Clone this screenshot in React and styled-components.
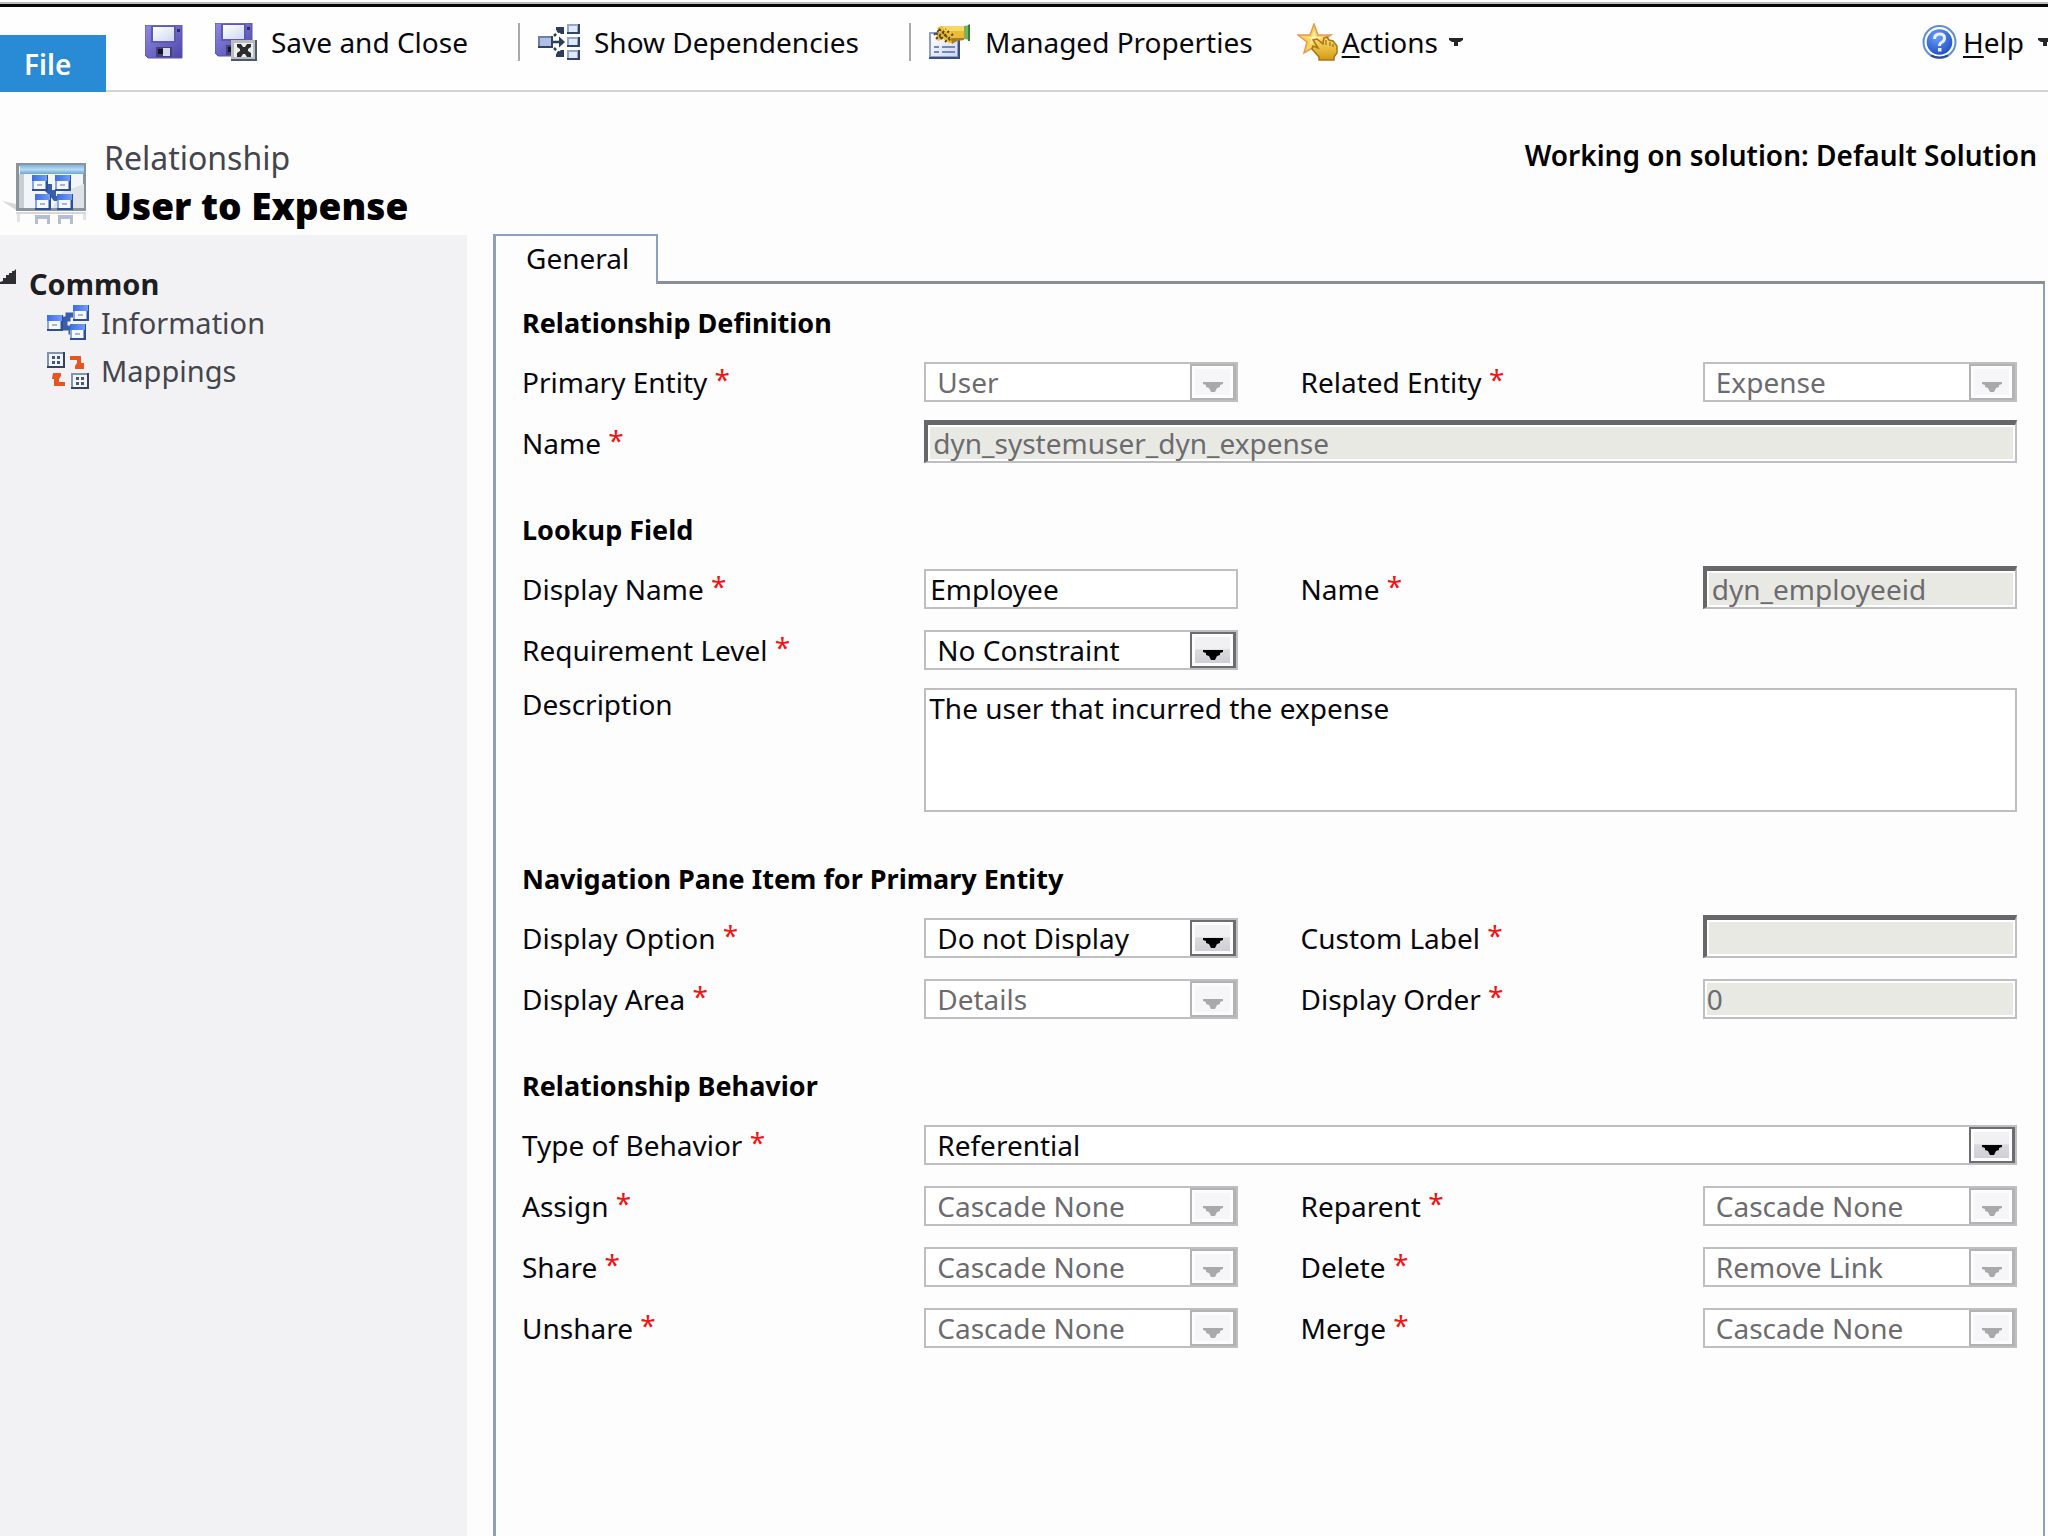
import React from "react";
import styled, { createGlobalStyle } from "styled-components";

const FONT = '"Noto Sans", "Open Sans", sans-serif';

const GlobalStyle = createGlobalStyle`
  *, *::before, *::after { box-sizing: border-box; }
  html, body { margin: 0; }
  body { background: #fdfdfe; color: #08080f; font-family: ${FONT}; font-size: 28px; line-height: 36px; }
  button, input, select, textarea { font: inherit; color: inherit; margin: 0; border-radius: 0; }
`;

const Page = styled.div`
  display: flex;
  flex-direction: column;
  min-height: 100vh;
  overflow: hidden;
`;

const TopEdge = styled.div`
  height: 7px;
  border-top: 2px solid #fff;
  border-bottom: 3px solid #0a0a0a;
  background: #bcbcbc;
`;

const Toolbar = styled.header`
  display: flex;
  align-items: flex-start;
  height: 85px;
  background: #fefefe;
  box-shadow: inset 0 -2px #d3d3d3;
`;

const FileButton = styled.button`
  flex: none;
  width: 106px;
  height: 57px;
  margin-top: 28px;
  padding: 0 24px;
  border: 0;
  background: #298bd6;
  color: #fff;
  font-weight: 600;
  text-align: left;
`;

const Tools = styled.nav`
  display: flex;
  flex: 1;
  align-items: center;
  height: 70px;
  padding-left: 39px;
`;

const ToolButton = styled.button`
  display: flex;
  align-items: center;
  gap: ${(p) => p.$gap ?? 14}px;
  margin-right: ${(p) => p.$after ?? 0}px;
  padding: 0;
  border: 0;
  background: none;
  white-space: nowrap;
  svg { flex: none; }
`;

const Separator = styled.span`
  width: 2px;
  height: 38px;
  margin: 0 18px 0 50px;
  background: #a9a9ae;
`;

const Spacer = styled.span`
  flex: 1;
`;

const AccessKey = styled.span`
  text-decoration: underline;
  text-decoration-thickness: 2px;
  text-underline-offset: 3px;
`;

const CaretSlot = styled.span`
  display: flex;
  padding-left: 8px;
`;

const TitleBar = styled.div`
  display: flex;
  align-items: flex-start;
  height: 143px;
  padding: 42px 11px 0 2px;
`;

const TitleIcon = styled.div`
  display: flex;
  width: 102px;
  padding-top: 28px;
`;

const Titles = styled.div`
  flex: 1;
`;

const Kind = styled.div`
  color: #45454d;
  font-size: 32px;
  line-height: 48px;
`;

const RecordName = styled.h1`
  margin: 0;
  color: #000;
  font-size: 37px;
  font-weight: 900;
  line-height: 48px;
`;

const SolutionNote = styled.div`
  font-weight: 600;
  line-height: 42px;
  color: #000;
`;

const Body = styled.div`
  display: flex;
  flex: 1;
`;

const Sidebar = styled.aside`
  flex: none;
  width: 467px;
  padding-top: 34px;
  background: #f2f2f5;
`;

const NavHeading = styled.h2`
  display: flex;
  align-items: flex-start;
  gap: 13px;
  margin: 0;
  color: #1d1d22;
  font-size: 29px;
  font-weight: 700;
  line-height: 30px;
  svg { flex: none; }
`;

const NavList = styled.ul`
  margin: 0;
  padding: 0 0 0 47px;
  list-style: none;
`;

const NavLink = styled.a`
  display: flex;
  align-items: center;
  gap: 12px;
  height: 48px;
  color: #45454d;
  font-size: 29px;
  text-decoration: none;
`;

const Main = styled.main`
  display: flex;
  flex: 1;
  flex-direction: column;
  min-width: 0;
  margin: -1px 3px 0 26px;
`;

const TabStrip = styled.div`
  display: flex;
  height: 50px;
`;

const Tab = styled.button`
  padding: 0 27px 4px 30px;
  border: solid #8ba0bd;
  border-width: 2px 2px 0 3px;
  background: none;
`;

const TabRule = styled.div`
  flex: 1;
  border-bottom: 3px solid #8a8d92;
`;

const Panel = styled.form`
  flex: 1;
  padding: 21px 26px 40px 26px;
  border: solid #8ba0bd;
  border-width: 0 2px 0 3px;
`;

const Section = styled.section`
  margin-bottom: 49px;
`;

const SectionTitle = styled.h3`
  margin: 0 0 21px;
  color: #000;
  font-size: 27px;
  font-weight: 700;
  line-height: 36px;
`;

const Row = styled.div`
  display: grid;
  grid-template-columns:
    minmax(0, 402fr) minmax(0, 314fr) minmax(0, 62fr) minmax(0, 402fr) minmax(0, 314fr);
  grid-template-rows: ${(p) => (p.$tall ? "124px" : "40px")};
  align-items: ${(p) => (p.$tall ? "start" : "end")};
  margin-top: ${(p) => (p.$first ? 0 : p.$tall ? 18 : 21)}px;
`;

const Label = styled.label`
  grid-column: ${(p) => (p.$right ? 4 : 1)};
  line-height: ${(p) => (p.$top ? 32 : 40)}px;
  white-space: nowrap;
`;

const Required = styled.span`
  color: #f01414;
  line-height: 0;
  vertical-align: 3px;
`;

const place = (p) => (p.$wide ? "2 / -1" : p.$right ? "5" : "2");

const TextInput = styled.input`
  grid-column: ${place};
  width: 100%;
  height: 40px;
  padding: 0 4px;
  border: 2px solid #bfbfc2;
  background: #fff;
  outline: 0;
  &:disabled {
    padding: 0 2px;
    background: #e9e9e4;
    box-shadow: inset 0 0 0 2px #fff;
    color: #6c6c70;
  }
`;

const InsetInput = styled(TextInput)`
  height: 43px;
  border-color: #67666a #bfbfc2 #bfbfc2 #67666a;
  border-width: 5px 2px 2px 4px;
  &:disabled { padding: 0 5px; }
`;

const TextArea = styled.textarea`
  grid-column: 2 / -1;
  width: 100%;
  height: 124px;
  padding: 0 3px;
  border: 2px solid #bfbfc2;
  background: #fff;
  outline: 0;
  resize: none;
`;

const SelectFrame = styled.div`
  display: grid;
  grid-column: ${place};
  height: 40px;
  border: 2px solid #bfbfc2;
  background: #fff;
`;

const SelectBox = styled.select`
  grid-area: 1 / 1;
  width: 100%;
  height: 36px;
  padding: 0 48px 0 11px;
  border: 0;
  outline: 0;
  appearance: none;
  background: none;
  &:disabled { color: #6c6c70; opacity: 1; }
`;

const SelectArrow = styled.span`
  display: flex;
  grid-area: 1 / 1;
  align-items: flex-end;
  justify-content: center;
  justify-self: end;
  width: 46px;
  height: 36px;
  padding-bottom: 6px;
  border: solid ${(p) => (p.$off ? "#b3b3b6" : "#6d6c72")};
  border-width: 2px 3px 2px 2px;
  background: ${(p) =>
    p.$off ? "#f6f6f8" : "linear-gradient(#f1f1f4 45%, #d9d9de 50%, #cdcdd3)"};
  box-shadow: inset 0 0 0 3px #fcfcfd;
  color: ${(p) => (p.$off ? "#a9a9ac" : "#000")};
  pointer-events: none;
`;

/* ---------- drawings ---------- */

const Caret = () => (
  <svg width="14" height="8" viewBox="0 0 14 8" aria-hidden="true">
    <path d="M0 0h14v2l-3 2H9v4H5V4H3L0 2z" fill="#26262a" />
  </svg>
);

const Disk = () => (
  <>
    <path d="M0 0h37v33H3l-3-3z" fill="url(#disk)" />
    <path d="M0 0h37v33H3l-3-3z" fill="none" stroke="#5a54ac" strokeWidth="1" />
    <rect x="6" y="1" width="25" height="17" fill="#5d58b0" />
    <rect x="8" y="2" width="21" height="14" fill="url(#paper)" />
    <rect x="32" y="4" width="3" height="3" fill="#2e2a70" />
    <rect x="11" y="22" width="16" height="10" fill="#45417a" />
    <rect x="18" y="23" width="7" height="8" fill="#d6dcee" />
    <rect x="13" y="24" width="5" height="5" fill="#15141f" />
  </>
);

const SharedPaints = () => (
  <svg width="0" height="0" style={{ position: "absolute" }} aria-hidden="true">
    <defs>
      <linearGradient id="disk" x1="0" y1="0" x2="1" y2="1">
        <stop offset="0" stopColor="#8f8be0" />
        <stop offset="1" stopColor="#4d46ab" />
      </linearGradient>
      <linearGradient id="paper" x1="0" y1="0" x2="1" y2="1">
        <stop offset="0" stopColor="#ffffff" />
        <stop offset="1" stopColor="#cfd8f1" />
      </linearGradient>
      <linearGradient id="blueTop" x1="0" y1="0" x2="1" y2="0">
        <stop offset="0" stopColor="#3c6ee0" />
        <stop offset="1" stopColor="#6f9cf5" />
      </linearGradient>
      <linearGradient id="gold" x1="0" y1="0" x2="0" y2="1">
        <stop offset="0" stopColor="#fbe070" />
        <stop offset="1" stopColor="#d49a12" />
      </linearGradient>
      <linearGradient id="sky" x1="0" y1="0" x2="0" y2="1">
        <stop offset="0" stopColor="#7fb2dc" />
        <stop offset="0.5" stopColor="#b5dcf5" />
        <stop offset="1" stopColor="#6fa3d0" />
      </linearGradient>
      <radialGradient id="helpBall" cx="0.4" cy="0.3" r="0.8">
        <stop offset="0" stopColor="#6aa0f6" />
        <stop offset="1" stopColor="#1747c4" />
      </radialGradient>
    </defs>
  </svg>
);

const SaveIcon = () => (
  <svg width="38" height="34" viewBox="0 0 38 34" aria-hidden="true">
    <Disk />
  </svg>
);

const SaveCloseIcon = () => (
  <svg width="42" height="38" viewBox="0 0 42 38" aria-hidden="true">
    <Disk />
    <rect x="16" y="17" width="26" height="21" fill="#4a5a66" />
    <rect x="16" y="17" width="24" height="19" fill="#b9bdc0" />
    <rect x="19" y="20" width="19" height="14" fill="#eceded" />
    <path d="M22 21h4l2 3h2l2-3h4v3l-3 2v2l3 2v4h-4l-2-3h-2l-2 3h-4v-4l3-2v-2l-3-2z" fill="#2c2c2c" />
  </svg>
);

const DependenciesIcon = () => (
  <svg width="42" height="36" viewBox="0 0 42 36" aria-hidden="true">
    <rect x="0" y="12" width="15" height="12" fill="#33425e" />
    <rect x="0" y="12" width="13" height="10" fill="#6c7fa8" />
    <rect x="2" y="14" width="11" height="8" fill="#b1bfe6" />
    {[0, 13, 26].map((y) => (
      <g key={y}>
        <rect x="29" y={y} width="13" height="10" fill="#2f4468" />
        <rect x="29" y={y} width="11" height="8" fill="#94a7c8" />
        <rect x="31" y={y + 2} width="8" height="6" fill="#dfe9fb" />
      </g>
    ))}
    <path d="M15 18h9" stroke="#2b3f5c" strokeWidth="2.5" />
    <path d="M21 12.500l6 5.500-6 5.500z" fill="#2b3f5c" />
    <path d="M16 12l8-8M16 24l8 8" stroke="#2b3f5c" strokeWidth="2.500" strokeDasharray="3 2" />
    <path d="M18 3h8v7h-3l-5-4zM18 33h8v-7h-3l-5 4z" fill="#2b3f5c" />
  </svg>
);

const PropertiesIcon = () => (
  <svg width="42" height="36" viewBox="0 0 42 36" aria-hidden="true">
    <rect x="0" y="8" width="31" height="27" fill="#38507f" />
    <rect x="0" y="8" width="29" height="25" fill="#8ea0c6" />
    <rect x="2" y="10" width="26" height="22" fill="url(#paper)" />
    <path d="M5 23h5M13 23h13M5 28h5M13 28h13" stroke="#7387b4" strokeWidth="2" />
    <path d="M8 4l4-2h23l1 2v10l-7 2-5 3h-4l-6-4-5 2-2-4 4-5z" fill="#e9bd3a" />
    <path d="M13 2h22v5H16z" fill="#f7d865" />
    <path d="M22 14h13v2l-7 1-5 3z" fill="#a87b1c" />
    <path d="M5 11l5-5M7 15l10-10M12 15l8-8M16 18l8-8M10 5l12 12M7 9l6 6" stroke="#5a430c" strokeWidth="1.800" strokeDasharray="2.500 2" />
    <path d="M35 2l6-1v15l-6-1z" fill="#7ab264" />
    <path d="M39 1l2-1v17h-2z" fill="#3c7d33" />
  </svg>
);

const ActionsIcon = () => (
  <svg width="42" height="38" viewBox="0 0 42 38" aria-hidden="true">
    <path d="M17 1l4 11h13l-10 7 3 12-10-7-10 6 3-11L1 12h12z" fill="#fbd45a" stroke="#e39a5a" strokeWidth="1.500" />
    <path d="M17 7l2 7h6l-6 5-6 2 1-5-5-2h6z" fill="#fff2a8" />
    <path d="M16 17l4-1 6 5 1-6 3-1 2 3 4 1 4 5v7l-3 4v3H22v-3l-7-8 1-3 5 2z" fill="url(#gold)" stroke="#a87516" strokeWidth="1.500" />
    <path d="M29 17v5M33 19v4M36 21v3" stroke="#a87516" strokeWidth="1.300" />
  </svg>
);

const HelpIcon = () => (
  <svg width="35" height="34" viewBox="0 0 35 34" aria-hidden="true">
    <circle cx="17.500" cy="17" r="16" fill="#fff" stroke="#5b8fd6" strokeWidth="2" />
    <path d="M9 30.500q8.500 4 17 0" fill="none" stroke="#2c4f86" strokeWidth="2" />
    <circle cx="17.500" cy="17" r="12.800" fill="url(#helpBall)" />
    <path d="M12.500 14q0-5 5-5t5 4q0 3-3 4.500-2 1-2 3.500" fill="none" stroke="#e9f0ff" strokeWidth="3" />
    <rect x="16" y="23" width="3.500" height="3.500" fill="#e9f0ff" />
  </svg>
);

const Entity = ({ x, y }) => (
  <g transform={`translate(${x} ${y})`}>
    <rect width="16" height="16" fill="#2d4f98" />
    <rect width="14" height="14" fill="#8aa6e4" />
    <rect width="15" height="6" fill="url(#blueTop)" />
    <rect x="2" y="6" width="11" height="8" fill="#f6f9ff" />
    <rect x="5" y="9" width="5" height="2" fill="#a9b6d4" />
  </g>
);

const RelationshipIcon = () => (
  <svg width="86" height="64" viewBox="0 0 86 64" aria-hidden="true">
    <path d="M0 39l14 3v6z" fill="#d6d8da" />
    <rect x="14" y="1" width="70" height="48" fill="#8b949b" />
    <rect x="17" y="4" width="64" height="42" fill="#f3f6f9" />
    <rect x="17" y="12" width="5" height="34" fill="#c9ced3" />
    <rect x="18" y="3" width="64" height="9" fill="url(#sky)" />
    <path d="M60 30l22-8v24H50z" fill="#dfe3e8" />
    <path d="M44 22h6v6h4v6h4v5h-6l-5-6-5-5z" fill="#3a5fa8" />
    <Entity x={30} y={13} />
    <Entity x={53} y={13} />
    <Entity x={33} y={32} />
    <Entity x={55} y={32} />
    <g opacity="0.4">
      <path d="M14 50h70v2H14z" fill="#9aa0a6" />
      <path d="M15 52h3v8h-3zM81 52h3v6h-3z" fill="#b9bdc1" />
      <path d="M33 53h15v9h-3v-5h-9v5h-3zM56 53h15v9h-3v-5h-9v5h-3z" fill="#4a5f94" />
    </g>
  </svg>
);

const InformationIcon = () => (
  <svg width="42" height="36" viewBox="0 0 42 36" aria-hidden="true">
    <path d="M15 14h6v-4h6M15 19h3v4h6v4h2" fill="none" stroke="#3a5fa8" strokeWidth="5" />
    <Entity x={0} y={10} />
    <Entity x={26} y={0} />
    <Entity x={23} y={19} />
  </svg>
);

const Grid4 = ({ x, y }) => (
  <g transform={`translate(${x} ${y})`}>
    <rect width="18" height="16" fill="#36435c" />
    <rect width="16" height="14" fill="#8592ad" />
    <rect x="2" y="2" width="14" height="12" fill="#f1f4fb" />
    <path d="M5 4h3v3H5zM10 4h3v3h-3zM5 9h3v3H5zM10 9h3v3h-3z" fill="#4a556e" />
  </g>
);

const MappingsIcon = () => (
  <svg width="42" height="38" viewBox="0 0 42 38" aria-hidden="true">
    <Grid4 x={0} y={0} />
    <Grid4 x={24} y={21} />
    <path d="M23 4h11v7h3v6h-9v-3l2-3V8h-7z" fill="#ea5420" />
    <path d="M6 21h8v3l-2 3v3h6v4H7v-7H5z" fill="#ea5420" />
  </svg>
);

const Triangle = () => (
  <svg width="16" height="16" viewBox="0 0 16 16" aria-hidden="true">
    <path d="M16 0v15H0v-2l3-1V9h3V6h3V4h3V2h2z" fill="#2e2e33" />
  </svg>
);

/* ---------- form pieces ---------- */

function FieldLabel({ id, text, required = true, right, top }) {
  return (
    <Label htmlFor={id} $right={right} $top={top}>
      {text}
      {required && <Required> *</Required>}
    </Label>
  );
}

function Dropdown({ id, value, disabled, right, wide }) {
  return (
    <SelectFrame $right={right} $wide={wide}>
      <SelectBox id={id} disabled={disabled} defaultValue={value}>
        <option>{value}</option>
      </SelectBox>
      <SelectArrow $off={disabled}>
        <svg width="20" height="10" viewBox="0 0 20 10" aria-hidden="true">
          <path d="M0 0h20v2l-3 1v2l-3 1-2 4H8L6 6 3 5V3L0 2z" fill="currentColor" />
        </svg>
      </SelectArrow>
    </SelectFrame>
  );
}

const cascades = [
  [["assign", "Assign", "Cascade None"], ["reparent", "Reparent", "Cascade None"]],
  [["share", "Share", "Cascade None"], ["delete", "Delete", "Remove Link"]],
  [["unshare", "Unshare", "Cascade None"], ["merge", "Merge", "Cascade None"]],
];

export default function App() {
  return (
    <Page>
      <GlobalStyle />
      <SharedPaints />
      <TopEdge />
      <Toolbar>
        <FileButton type="button">File</FileButton>
        <Tools aria-label="Form commands">
          <ToolButton type="button" aria-label="Save" $after={32}>
            <SaveIcon />
          </ToolButton>
          <ToolButton type="button">
            <SaveCloseIcon />
            Save and Close
          </ToolButton>
          <Separator />
          <ToolButton type="button">
            <DependenciesIcon />
            Show Dependencies
          </ToolButton>
          <Separator />
          <ToolButton type="button" $after={44}>
            <PropertiesIcon />
            Managed Properties
          </ToolButton>
          <ToolButton type="button" $gap={3}>
            <ActionsIcon />
            <span><AccessKey>A</AccessKey>ctions</span>
            <CaretSlot><Caret /></CaretSlot>
          </ToolButton>
          <Spacer />
          <ToolButton type="button" $gap={6} $after={-4}>
            <HelpIcon />
            <span><AccessKey>H</AccessKey>elp</span>
            <CaretSlot><Caret /></CaretSlot>
          </ToolButton>
        </Tools>
      </Toolbar>

      <TitleBar>
        <TitleIcon><RelationshipIcon /></TitleIcon>
        <Titles>
          <Kind>Relationship</Kind>
          <RecordName>User to Expense</RecordName>
        </Titles>
        <SolutionNote>Working on solution: Default Solution</SolutionNote>
      </TitleBar>

      <Body>
        <Sidebar>
          <NavHeading><Triangle />Common</NavHeading>
          <NavList>
            <li><NavLink href="#information"><InformationIcon />Information</NavLink></li>
            <li><NavLink href="#mappings"><MappingsIcon />Mappings</NavLink></li>
          </NavList>
        </Sidebar>

        <Main>
          <TabStrip>
            <Tab type="button">General</Tab>
            <TabRule />
          </TabStrip>
          <Panel>
            <Section>
              <SectionTitle>Relationship Definition</SectionTitle>
              <Row $first>
                <FieldLabel id="primary" text="Primary Entity" />
                <Dropdown id="primary" value="User" disabled />
                <FieldLabel id="related" text="Related Entity" right />
                <Dropdown id="related" value="Expense" disabled right />
              </Row>
              <Row>
                <FieldLabel id="name" text="Name" />
                <InsetInput id="name" defaultValue="dyn_systemuser_dyn_expense" disabled $wide />
              </Row>
            </Section>

            <Section>
              <SectionTitle>Lookup Field</SectionTitle>
              <Row $first>
                <FieldLabel id="displayName" text="Display Name" />
                <TextInput id="displayName" defaultValue="Employee" />
                <FieldLabel id="lookupName" text="Name" right />
                <InsetInput id="lookupName" defaultValue="dyn_employeeid" disabled $right />
              </Row>
              <Row>
                <FieldLabel id="level" text="Requirement Level" />
                <Dropdown id="level" value="No Constraint" />
              </Row>
              <Row $tall>
                <FieldLabel id="description" text="Description" required={false} top />
                <TextArea id="description" defaultValue="The user that incurred the expense" />
              </Row>
            </Section>

            <Section>
              <SectionTitle>Navigation Pane Item for Primary Entity</SectionTitle>
              <Row $first>
                <FieldLabel id="option" text="Display Option" />
                <Dropdown id="option" value="Do not Display" />
                <FieldLabel id="custom" text="Custom Label" right />
                <InsetInput id="custom" disabled $right />
              </Row>
              <Row>
                <FieldLabel id="area" text="Display Area" />
                <Dropdown id="area" value="Details" disabled />
                <FieldLabel id="order" text="Display Order" right />
                <TextInput id="order" defaultValue="0" disabled $right />
              </Row>
            </Section>

            <Section>
              <SectionTitle>Relationship Behavior</SectionTitle>
              <Row $first>
                <FieldLabel id="behavior" text="Type of Behavior" />
                <Dropdown id="behavior" value="Referential" wide />
              </Row>
              {cascades.map(([left, right]) => (
                <Row key={left[0]}>
                  <FieldLabel id={left[0]} text={left[1]} />
                  <Dropdown id={left[0]} value={left[2]} disabled />
                  <FieldLabel id={right[0]} text={right[1]} right />
                  <Dropdown id={right[0]} value={right[2]} disabled right />
                </Row>
              ))}
            </Section>
          </Panel>
        </Main>
      </Body>
    </Page>
  );
}
